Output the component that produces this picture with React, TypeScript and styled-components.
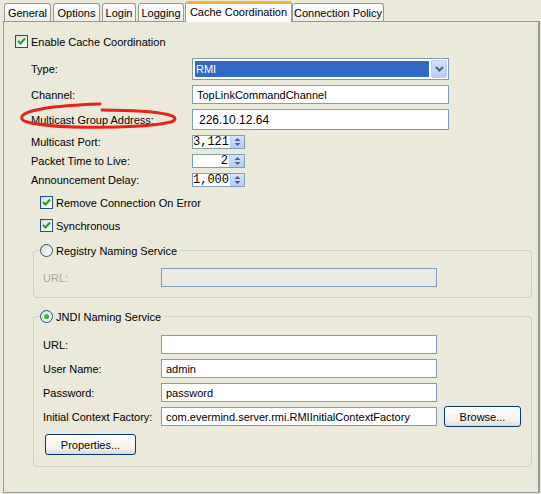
import React from "react";
import styled, { createGlobalStyle } from "styled-components";

const GlobalStyle = createGlobalStyle`
  body {
    margin: 0;
    background: #ebe9da;
    font-family: "Liberation Sans", Arial, sans-serif;
    font-size: 11px;
    color: #000;
  }
  * { box-sizing: border-box; }
`;

const Window = styled.div`
  width: 541px;
  height: 494px;
  padding-top: 1px;
  background: #ebe9da;
  position: relative;
  overflow: hidden;
`;

const TabBar = styled.div`
  display: flex;
  align-items: flex-end;
  height: 20px;
  padding-left: 4px;
  position: relative;
  z-index: 1;
`;

const Tab = styled.div<{ $w: number; $mr: number; $active?: boolean }>`
  width: ${(p) => p.$w}px;
  margin-right: ${(p) => p.$mr}px;
  height: ${(p) => (p.$active ? 21 : 18)}px;
  margin-bottom: ${(p) => (p.$active ? -1 : 0)}px;
  border: 1px solid #919b9c;
  border-bottom: none;
  border-radius: 3px 3px 0 0;
  background: ${(p) =>
    p.$active ? "#fcfcfe" : "linear-gradient(#ffffff, #f3f2ec 70%, #ecebe4)"};
  border-top: ${(p) => (p.$active ? "3px solid #f5b23a" : "1px solid #919b9c")};
  display: flex;
  align-items: center;
  justify-content: center;
  padding-bottom: ${(p) => (p.$active ? 2 : 0)}px;
  white-space: nowrap;
`;

const Panel = styled.div`
  margin-left: 3px;
  width: 537px;
  height: 472px;
  border: 1px solid #919b9c;
  border-right: 2px solid #919b9c;
  background: #ebe9da;
  padding: 13px 0 0 11px;
  position: relative;
`;

const CheckRow = styled.label<{ $ml?: number; $mt?: number }>`
  display: flex;
  align-items: center;
  gap: 3px;
  height: 13px;
  margin-left: ${(p) => p.$ml ?? 0}px;
  margin-top: ${(p) => p.$mt ?? 0}px;
`;

const Box = styled.span`
  width: 13px;
  height: 13px;
  border: 1px solid #1c5180;
  background: linear-gradient(135deg, #dcdcd5, #ffffff);
  display: flex;
  align-items: center;
  justify-content: center;
`;

const Radio = styled.span`
  width: 13px;
  height: 13px;
  border-radius: 50%;
  border: 1px solid #1c5180;
  background: linear-gradient(135deg, #dcdcd5, #ffffff);
  display: flex;
  align-items: center;
  justify-content: center;
`;

const Dot = styled.span`
  width: 5px;
  height: 5px;
  border-radius: 50%;
  background: radial-gradient(circle at 35% 35%, #55d351, #21a121 70%);
`;

const FormGrid = styled.div`
  display: grid;
  grid-template-columns: 161px 257px;
  row-gap: 5px;
  margin: 10px 0 0 16px;
  align-items: center;
`;

const Label = styled.span<{ $disabled?: boolean }>`
  color: ${(p) => (p.$disabled ? "#aca899" : "#000")};
  white-space: nowrap;
`;

const TextField = styled.div<{ $h?: number; $w?: number; $disabled?: boolean; $big?: boolean }>`
  height: ${(p) => p.$h ?? 19}px;
  width: ${(p) => (p.$w ? `${p.$w}px` : "100%")};
  border: 1px solid #7f9db9;
  background: ${(p) => (p.$disabled ? "#ebeae3" : "#fff")};
  display: flex;
  align-items: center;
  padding-left: ${(p) => (p.$big ? 6 : 4)}px;
  font-size: ${(p) => (p.$big ? 12 : 11)}px;
  white-space: nowrap;
  overflow: hidden;
`;

const Combo = styled.div`
  height: 22px;
  border: 1px solid #7f9db9;
  background: #fff;
  padding: 2px 1px 1px 2px;
  display: flex;
  gap: 2px;
`;

const ComboValue = styled.div`
  flex: 1;
  background: #316ac5;
  color: #fff;
  display: flex;
  align-items: center;
  padding-left: 1px;
  height: 16px;
`;

const ComboButton = styled.div`
  width: 16px;
  height: 18px;
  margin-top: -1px;
  border: 1px solid #b9cdf8;
  border-radius: 2px;
  background: linear-gradient(#d2e0fd, #b8cdf9);
  display: flex;
  align-items: center;
  justify-content: center;
`;

const Spinner = styled.div`
  width: 53px;
  height: 14px;
  border: 1px solid #7f9db9;
  background: #fff;
  display: flex;
`;

const SpinValue = styled.div`
  flex: 1;
  font-family: "Liberation Mono", "Courier New", monospace;
  font-size: 12px;
  line-height: 12px;
  text-align: right;
  padding-right: 1px;
`;

const SpinButton = styled.div`
  width: 15px;
  background: linear-gradient(#d6e3fd, #b5cbf8);
  border-left: 1px solid #b9cdf8;
  display: flex;
  align-items: center;
  justify-content: center;
`;

const Group = styled.fieldset<{ $mt: number; $pt: number; $pb: number }>`
  margin: ${(p) => p.$mt}px 0 0 18px;
  width: 499px;
  border: 1px solid #d0d0bf;
  border-radius: 4px;
  padding: 0 9px ${(p) => p.$pb}px 9px;
  min-width: 0;
  & > legend + * {
    margin-top: ${(p) => p.$pt}px;
  }
`;

const Legend = styled.legend`
  padding: 0 3px 0 0;
  margin-left: -3px;
  display: flex;
  align-items: center;
  gap: 3px;
  height: 13px;
`;

const GroupGrid = styled.div`
  display: grid;
  grid-template-columns: 118px 276px auto;
  grid-auto-rows: 19px;
  row-gap: 5px;
  align-items: center;
`;

const FactoryRow = styled.div`
  grid-column: 2 / 4;
  display: flex;
  align-items: center;
  gap: 7px;
  height: 21px;
`;

const Button = styled.button<{ $w: number }>`
  width: ${(p) => p.$w}px;
  height: 21px;
  border: 1px solid #003c74;
  border-radius: 3px;
  background: linear-gradient(#ffffff, #f3f2ed 70%, #dcd8ce);
  font-family: "Liberation Sans", Arial, sans-serif;
  font-size: 11px;
  color: #000;
  padding: 0;
`;

const PropsButton = styled(Button)`
  margin-top: 8px;
  margin-left: 2px;
`;

const Annotation = styled.svg`
  position: absolute;
  left: 0;
  top: 0;
  pointer-events: none;
`;

const Check = () => (
  <svg width="9" height="9" viewBox="0 0 9 9">
    <path d="M1 4 L3.5 6.5 L8 1.5" fill="none" stroke="#21a121" strokeWidth="2" />
  </svg>
);

const Chevron = () => (
  <svg width="9" height="6" viewBox="0 0 9 6">
    <path d="M1 1 L4.5 4.5 L8 1" fill="none" stroke="#4d6185" strokeWidth="2" />
  </svg>
);

const UpDown = () => (
  <svg width="7" height="10" viewBox="0 0 7 10">
    <path d="M3.5 1 L6.5 4 L0.5 4 Z M0.5 6 L6.5 6 L3.5 9 Z" fill="#4d6185" />
  </svg>
);

const tabs = [
  { name: "General", w: 47, mr: 2 },
  { name: "Options", w: 47, mr: 2 },
  { name: "Login", w: 34, mr: 2 },
  { name: "Logging", w: 46, mr: 1 },
  { name: "Cache Coordination", w: 107, mr: 0, active: true },
  { name: "Connection Policy", w: 92, mr: 0 },
];

const App = () => {
  return (
    <Window>
      <GlobalStyle />
      <TabBar>
        {tabs.map((t) => (
          <Tab key={t.name} $w={t.w} $mr={t.mr} $active={t.active}>
            {t.name}
          </Tab>
        ))}
      </TabBar>
      <Panel>
        <CheckRow>
          <Box>
            <Check />
          </Box>
          Enable Cache Coordination
        </CheckRow>
        <FormGrid>
          <Label>Type:</Label>
          <Combo>
            <ComboValue>RMI</ComboValue>
            <ComboButton>
              <Chevron />
            </ComboButton>
          </Combo>
          <Label>Channel:</Label>
          <TextField>TopLinkCommandChannel</TextField>
          <Label>Multicast Group Address:</Label>
          <TextField $h={21} $big>
            226.10.12.64
          </TextField>
          <Label>Multicast Port:</Label>
          <Spinner>
            <SpinValue>3,121</SpinValue>
            <SpinButton>
              <UpDown />
            </SpinButton>
          </Spinner>
          <Label>Packet Time to Live:</Label>
          <Spinner>
            <SpinValue>2</SpinValue>
            <SpinButton>
              <UpDown />
            </SpinButton>
          </Spinner>
          <Label>Announcement Delay:</Label>
          <Spinner>
            <SpinValue>1,000</SpinValue>
            <SpinButton>
              <UpDown />
            </SpinButton>
          </Spinner>
        </FormGrid>
        <CheckRow $ml={25} $mt={9}>
          <Box>
            <Check />
          </Box>
          Remove Connection On Error
        </CheckRow>
        <CheckRow $ml={25} $mt={10}>
          <Box>
            <Check />
          </Box>
          Synchronous
        </CheckRow>
        <Group $mt={12} $pt={11} $pb={10}>
          <Legend>
            <Radio />
            Registry Naming Service
          </Legend>
          <GroupGrid>
            <Label $disabled>URL:</Label>
            <TextField $disabled />
          </GroupGrid>
        </Group>
        <Group $mt={12} $pt={12} $pb={11}>
          <Legend>
            <Radio>
              <Dot />
            </Radio>
            JNDI Naming Service
          </Legend>
          <div>
            <GroupGrid>
              <Label>URL:</Label>
              <TextField />
              <span />
              <Label>User Name:</Label>
              <TextField>admin</TextField>
              <span />
              <Label>Password:</Label>
              <TextField>password</TextField>
              <span />
              <Label>Initial Context Factory:</Label>
              <FactoryRow>
                <TextField $w={276}>com.evermind.server.rmi.RMIInitialContextFactory</TextField>
                <Button $w={77}>Browse...</Button>
              </FactoryRow>
            </GroupGrid>
            <PropsButton $w={91}>Properties...</PropsButton>
          </div>
        </Group>
        <Annotation width="541" height="494">
          <path
            d="M100 104 C 55 105.5, 18 110, 22 119 C 27 129, 140 130, 171 122 C 183 117, 170 110.5, 102 110"
            fill="none"
            stroke="#e8221c"
            strokeWidth="3"
            strokeLinecap="round"
            transform="translate(-4 -22)"
          />
        </Annotation>
      </Panel>
    </Window>
  );
};

export default App;
